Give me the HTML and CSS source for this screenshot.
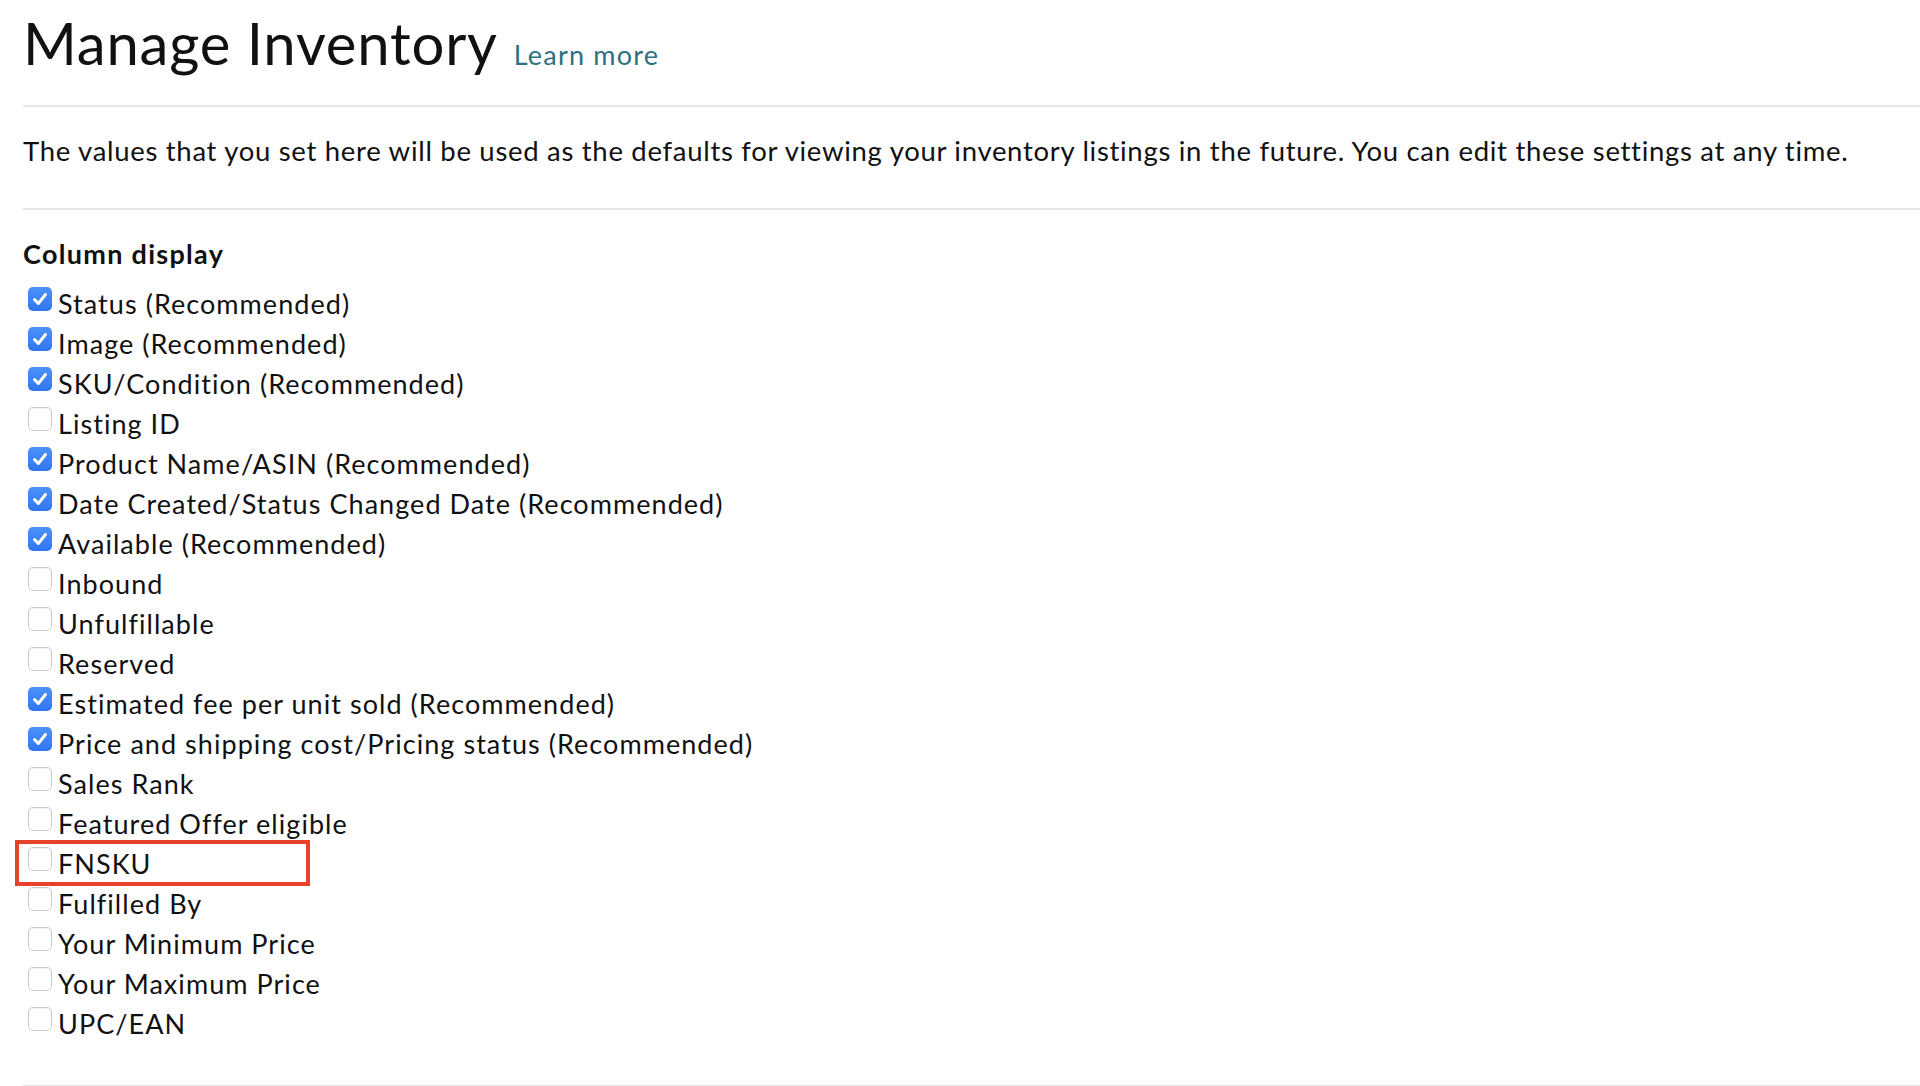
FILE: index.html
```html
<!DOCTYPE html>
<html lang="en">
<head>
<meta charset="utf-8">
<title>Manage Inventory</title>
<link rel="stylesheet" href="styles.css">
</head>
<body>
<div class="page">
  <header class="head">
    <h1 class="title">Manage Inventory</h1>
    <a class="learn" href="#">Learn more</a>
  </header>
  <p class="intro">The values that you set here will be used as the defaults for viewing your inventory listings in the future. You can edit these settings at any time.</p>
  <section class="cols">
    <h2 class="cols-title">Column display</h2>
    <ul class="list">
      <li class="row"><span class="box on"><svg viewBox="0 0 24 24"><path d="M6.5 12.5 L10.3 16.5 L17.5 7.5" /></svg></span><span class="label">Status (Recommended)</span></li>
      <li class="row"><span class="box on"><svg viewBox="0 0 24 24"><path d="M6.5 12.5 L10.3 16.5 L17.5 7.5" /></svg></span><span class="label">Image (Recommended)</span></li>
      <li class="row"><span class="box on"><svg viewBox="0 0 24 24"><path d="M6.5 12.5 L10.3 16.5 L17.5 7.5" /></svg></span><span class="label">SKU/Condition (Recommended)</span></li>
      <li class="row"><span class="box"></span><span class="label">Listing ID</span></li>
      <li class="row"><span class="box on"><svg viewBox="0 0 24 24"><path d="M6.5 12.5 L10.3 16.5 L17.5 7.5" /></svg></span><span class="label">Product Name/ASIN (Recommended)</span></li>
      <li class="row"><span class="box on"><svg viewBox="0 0 24 24"><path d="M6.5 12.5 L10.3 16.5 L17.5 7.5" /></svg></span><span class="label">Date Created/Status Changed Date (Recommended)</span></li>
      <li class="row"><span class="box on"><svg viewBox="0 0 24 24"><path d="M6.5 12.5 L10.3 16.5 L17.5 7.5" /></svg></span><span class="label">Available (Recommended)</span></li>
      <li class="row"><span class="box"></span><span class="label">Inbound</span></li>
      <li class="row"><span class="box"></span><span class="label">Unfulfillable</span></li>
      <li class="row"><span class="box"></span><span class="label">Reserved</span></li>
      <li class="row"><span class="box on"><svg viewBox="0 0 24 24"><path d="M6.5 12.5 L10.3 16.5 L17.5 7.5" /></svg></span><span class="label">Estimated fee per unit sold (Recommended)</span></li>
      <li class="row"><span class="box on"><svg viewBox="0 0 24 24"><path d="M6.5 12.5 L10.3 16.5 L17.5 7.5" /></svg></span><span class="label">Price and shipping cost/Pricing status (Recommended)</span></li>
      <li class="row"><span class="box"></span><span class="label">Sales Rank</span></li>
      <li class="row"><span class="box"></span><span class="label">Featured Offer eligible</span></li>
      <li class="row marked"><span class="box"></span><span class="label">FNSKU</span><span class="mark"></span></li>
      <li class="row"><span class="box"></span><span class="label">Fulfilled By</span></li>
      <li class="row"><span class="box"></span><span class="label">Your Minimum Price</span></li>
      <li class="row"><span class="box"></span><span class="label">Your Maximum Price</span></li>
      <li class="row"><span class="box"></span><span class="label">UPC/EAN</span></li>
    </ul>
  </section>
</div>
</body>
</html>
```

FILE: styles.css
```css
html, body {
  margin: 0;
  padding: 0;
  background: #ffffff;
}

body {
  font-family: Lato, "Open Sans", "DejaVu Sans", sans-serif;
  color: #111111;
}

.page {
  padding-left: 23px;
}

.head {
  display: flex;
  align-items: baseline;
  gap: 16px;
  padding-top: 7px;
  padding-bottom: 26px;
  border-bottom: 2px solid #e7e7e7;
}

.title {
  margin: 0;
  font-size: 58px;
  font-weight: 400;
  line-height: 72px;
  letter-spacing: 0.8px;
  color: #111111;
}

.learn {
  font-size: 27px;
  letter-spacing: 1.2px;
  color: #2f6f82;
  text-decoration: none;
}

.intro {
  margin: 0;
  padding-top: 24px;
  padding-bottom: 37px;
  font-size: 27.5px;
  line-height: 40px;
  letter-spacing: 0.7px;
  white-space: nowrap;
  border-bottom: 2px solid #e7e7e7;
}

.cols {
  padding-top: 27px;
  padding-bottom: 41px;
  border-bottom: 2px solid #e7e7e7;
}

.cols-title {
  margin: 0 0 13px 0;
  font-size: 27px;
  font-weight: 700;
  line-height: 34px;
  letter-spacing: 1.3px;
}

.list {
  list-style: none;
  margin: 0;
  padding: 0;
}

.row {
  position: relative;
  display: flex;
  align-items: flex-start;
  height: 40px;
  font-size: 27px;
  line-height: 40px;
  letter-spacing: 1.05px;
}

.box {
  flex: none;
  box-sizing: border-box;
  width: 24px;
  height: 24px;
  margin: 3px 6px 0 5px;
  border: 1.5px solid #c9c9c9;
  border-radius: 5px;
  background: #ffffff;
  box-shadow: inset 0 1px 1px rgba(0, 0, 0, 0.05);
}

.box.on {
  border: none;
  background: linear-gradient(#4c90f9, #3076f0);
  box-shadow: none;
}

.box svg {
  display: block;
  width: 24px;
  height: 24px;
}

.box svg path {
  fill: none;
  stroke: #ffffff;
  stroke-width: 3;
  stroke-linecap: round;
  stroke-linejoin: round;
}

.label {
  white-space: nowrap;
}

.mark {
  position: absolute;
  left: -8px;
  top: -4px;
  width: 295px;
  height: 46px;
  box-sizing: border-box;
  border: 4px solid #e5432a;
}
```
